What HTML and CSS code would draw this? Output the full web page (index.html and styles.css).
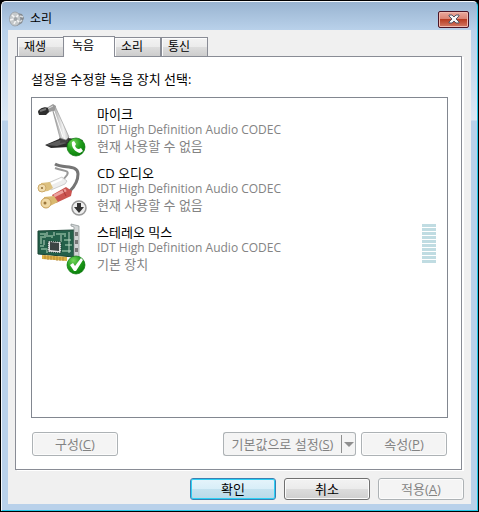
FILE: index.html
```html
<!DOCTYPE html>
<html lang="ko">
<head>
<meta charset="UTF-8">
<meta name="viewport" content="width=device-width, initial-scale=1">
<title>소리</title>
<link rel="stylesheet" href="styles.css">
</head>
<body>
<div class="window">
    <header class="titlebar">
        <svg class="title-icon" viewBox="0 0 16 16" aria-hidden="true">
            <path d="M8 2l5 1 2 4-2 5-5 3z" fill="#858a8f"/>
            <ellipse cx="6" cy="8" rx="5.500" ry="7" fill="#c5c9cb" stroke="#92989d" stroke-width=".7"/>
            <path d="M3 4l3 3M1 9l4-1M5 13l2-4M9 4L7 7M10 11L8 9" stroke="#f5f5f5" stroke-width="1.500"/>
            <circle cx="6.500" cy="8" r="2" fill="#a1a6a9"/>
            <path d="M11 5l3 1M11 11l2-2" stroke="#d9dcde" stroke-width="1.500"/>
        </svg>
        <h1 class="title">소리</h1>
        <button class="close" aria-label="닫기">
            <svg viewBox="0 0 12 10" aria-hidden="true">
                <path d="M1 1h3l2 2 2-2h3v1L8 5l3 3v1H8L6 7 4 9H1V8l3-3-3-3z" fill="#f7f7f7" stroke="#535666"/>
            </svg>
        </button>
    </header>
    <main class="dialog">
        <div class="tabs" role="tablist">
            <button class="tab" role="tab">재생</button>
            <button class="tab active" role="tab" aria-selected="true">녹음</button>
            <button class="tab" role="tab">소리</button>
            <button class="tab" role="tab">통신</button>
        </div>
        <section class="panel">
            <p class="prompt">설정을 수정할 녹음 장치 선택:</p>
            <ul class="devices">
                <li class="device">
                    <svg class="device-icon" viewBox="0 0 50 56" aria-hidden="true">
                        <defs>
                            <linearGradient id="arm" x1="0" x2="1" y1=".3" y2="0">
                                <stop offset="0" stop-color="#888"/>
                                <stop offset=".5" stop-color="#f4f4f4"/>
                                <stop offset="1" stop-color="#888"/>
                            </linearGradient>
                            <radialGradient id="green" cx=".35" cy=".25" r=".8">
                                <stop offset="0" stop-color="#75d65c"/>
                                <stop offset=".5" stop-color="#23a01e"/>
                                <stop offset="1" stop-color="#087c08"/>
                            </radialGradient>
                        </defs>
                        <path d="M8 43l14-6 3-4 6 3 15 2-4 6-10 1-18 1z" fill="#2c2c2c"/>
                        <path d="M9 43l14-5 7 3-10 3z" fill="#5d5d5d"/>
                        <path d="M24 34l8 1-1 5-8 1z" fill="#444"/>
                        <path d="M15 6l3-2 14 31-3 3-6-2z" fill="url(#arm)" stroke="#8b8b8b" stroke-width=".6"/>
                        <path d="M17 9l9 26" stroke="#fff"/>
                        <path d="M8 7l8-5 3 2-1 4-8 3z" fill="#999"/>
                        <path d="M10 7l6-3" stroke="#ddd"/>
                        <path d="M1 10c0-3 7-6 10-4l1 4-3 3-7 0z" fill="#2e2e2e"/>
                        <path d="M3 9l6-2" stroke="#777" stroke-width="2"/>
                        <circle cx="39" cy="45" r="9" fill="url(#green)" stroke="#0c780e" stroke-width=".7"/>
                        <path d="M35 40l2-1 2 3-1 2c1 2 2 3 4 3l2-1 2 3-3 2c-5-1-9-6-8-11z" fill="#fff"/>
                    </svg>
                    <div class="device-text">
                        <h2 class="device-name">마이크</h2>
                        <p class="driver">IDT High Definition Audio CODEC</p>
                        <p>현재 사용할 수 없음</p>
                    </div>
                </li>
                <li class="device">
                    <svg class="device-icon" viewBox="0 0 50 56" aria-hidden="true">
                        <path d="M18 3c8 5 23 0 23 10 0 7-3 12-8 17" fill="none" stroke="#757575" stroke-width="3"/>
                        <path d="M18 7c8 3 15 2 12 7l-4 5" fill="none" stroke="#999" stroke-width="2"/>
                        <path d="M11 22l14-6 5 4-2 3-14 6z" fill="#eee" stroke="#bbb" stroke-width=".7"/>
                        <path d="M14 23l11-5" stroke="#fff" stroke-width="2"/>
                        <path d="M4 22l9-1 3 6-5 3-7 1z" fill="#dcc07f"/>
                        <circle cx="5" cy="27" r="4" fill="#efdbae" stroke="#cdaa69"/>
                        <path d="M15 34l14-8 6 4-1 5-15 7z" fill="#cb5551"/>
                        <path d="M17 35l12-6" stroke="#eda29f" stroke-width="3"/>
                        <path d="M26 29l3 6" stroke="#aa3838"/>
                        <path d="M7 36l10-1 4 6-6 3-8 3z" fill="#d9b970"/>
                        <circle cx="9" cy="42" r="5" fill="#efd8a4" stroke="#c79f58"/>
                        <circle cx="5" cy="27" r="1" fill="#8d6930"/>
                        <circle cx="8" cy="42" r="1.500" fill="#9b763b"/>
                        <circle cx="42" cy="47" r="7" fill="#eee" stroke="#999" stroke-width="1.500"/>
                        <path d="M40 42h4v4h3l-5 6-5-6h3z" fill="#333"/>
                    </svg>
                    <div class="device-text">
                        <h2 class="device-name">CD 오디오</h2>
                        <p class="driver">IDT High Definition Audio CODEC</p>
                        <p>현재 사용할 수 없음</p>
                    </div>
                </li>
                <li class="device">
                    <svg class="device-icon" viewBox="0 0 50 56" aria-hidden="true">
                        <path d="M1 11l36-1v27L1 34z" fill="#24604a" stroke="#194333"/>
                        <path d="M3 14h5v3H4v7M19 14h9v3M27 20h7M28 25h7M4 29h6v4M25 31h9M11 16h4v2M3 26h4" fill="none" stroke="#6c9e84" stroke-width="2"/>
                        <path d="M10 12v5M17 12v4M24 15v7M32 12v21M7 20v5" stroke="#b9d1c0"/>
                        <path d="M11 21l13 1v11l-13-1z" fill="#ddd" stroke="#143529" stroke-dasharray="1 1"/>
                        <path d="M13 22l9 1v8l-9-1z" fill="#3c4444"/>
                        <path d="M5 35l25 2v4L5 39z" fill="#deb145"/>
                        <path d="M8 35v4M11 35v5M14 36v4M17 36v4M20 36v5M23 37v4M26 37v4" stroke="#a5772d" stroke-width=".7"/>
                        <path d="M37 7l-3-1V4l8 2v35l-5-2z" fill="#d1d4d5" stroke="#8a9294" stroke-width=".7"/>
                        <path d="M38 12h3v4h-3zM38 20h3v4h-3zM38 28h3v4h-3z" fill="#777"/>
                        <circle cx="39" cy="45" r="9" fill="url(#green)" stroke="#0c780e" stroke-width=".7"/>
                        <path d="M33 45l3-2 2 3 6-8 2 2-7 11h-2z" fill="#fff"/>
                    </svg>
                    <div class="device-text">
                        <h2 class="device-name">스테레오 믹스</h2>
                        <p class="driver">IDT High Definition Audio CODEC</p>
                        <p>기본 장치</p>
                    </div>
                    <div class="level" role="img" aria-label="입력 수준"></div>
                </li>
            </ul>
            <div class="actions">
                <button class="btn" disabled>구성(<u>C</u>)</button>
                <div class="split">
                    <button class="btn split-main" disabled>기본값으로 설정(<u>S</u>)</button>
                    <button class="btn split-arrow" aria-label="기본값 옵션" disabled></button>
                </div>
                <button class="btn" disabled>속성(<u>P</u>)</button>
            </div>
        </section>
        <footer class="footer">
            <button class="btn default">확인</button>
            <button class="btn">취소</button>
            <button class="btn" disabled>적용(<u>A</u>)</button>
        </footer>
    </main>
</div>
</body>
</html>
```

FILE: styles.css
```css
* {
    box-sizing: border-box;
}
body {
    margin: 0;
    min-height: 100vh;
    padding: 1px;
    display: flex;
    background: #000;
    color: #000;
    font: 13px/16px "Open Sans", "Noto Sans CJK KR", sans-serif;
}
h1, h2, p, ul {
    margin: 0;
    padding: 0;
    font-size: inherit;
    font-weight: normal;
}
button {
    font: inherit;
    color: inherit;
    padding: 0;
}

/* window frame */
.window {
    flex: 1;
    display: flex;
    flex-direction: column;
    padding: 0 6px 6px;
    border: 1px solid #22c8e8;
    border-top-color: #f4f8fc;
    border-left-color: #f4f8fc;
    border-radius: 5px 5px 0 0;
    background: linear-gradient(#99b4d1 0, #b9d1ea 28px, #dce8f5 118px, #b9d1ea 119px);
}
.titlebar {
    height: 28px;
    display: flex;
    align-items: center;
    padding: 6px 2px 0 1px;
}
.title-icon {
    width: 16px;
    height: 16px;
    margin-right: 5px;
}
.title {
    flex: 1;
    font-size: 12px;
}
.close {
    width: 31px;
    height: 17px;
    display: flex;
    align-items: center;
    justify-content: center;
    border: 1px solid #4c1526;
    border-radius: 2px;
    background: linear-gradient(#eba99d, #d98070 50%, #b83c22 50%, #d37a66);
    box-shadow: inset 0 0 0 1px #f0b9ae;
}
.close svg {
    width: 12px;
    height: 10px;
}
.dialog {
    flex: 1;
    display: flex;
    flex-direction: column;
    padding: 6px 7px 4px;
    background: #f0f0f0;
}

/* tabs */
.tabs {
    display: flex;
    align-items: flex-end;
    padding-left: 2px;
}
.tab {
    width: 47px;
    height: 19px;
    padding: 0 7px 0 6px;
    border: 1px solid #898c95;
    border-bottom: 0;
    background: linear-gradient(#f3f3f3, #ebebeb 50%, #dddddd 50%, #cdcdcd);
    box-shadow: inset 1px 1px #fcfcfc;
    font-size: 12px;
    text-align: left;
}
.tab.active {
    width: 52px;
    height: 21px;
    padding-left: 8px;
    padding-bottom: 2px;
    margin: 0 -1px -1px;
    background: #fff;
    z-index: 1;
}
.panel {
    flex: 1;
    display: flex;
    flex-direction: column;
    padding: 14px 13px 13px 15px;
    margin-right: 2px;
    border: 1px solid #898c95;
    background: #fff;
    box-shadow: 2px 1px #fff;
}
.prompt {
    margin-bottom: 10px;
}

/* device list */
.devices {
    flex: 1;
    padding: 4px 11px 4px 5px;
    border: 1px solid #828790;
    list-style: none;
}
.device {
    display: flex;
    align-items: center;
    gap: 10px;
    margin-bottom: 3px;
}
.device-icon {
    width: 50px;
    height: 56px;
}
.device-text {
    flex: 1;
    color: #838383;
}
.device-name {
    color: #000;
}
.driver {
    font-size: 12px;
}
.level {
    width: 14px;
    height: 39px;
    margin-bottom: 9px;
    background: repeating-linear-gradient(#c0dce2 0 3px, #fff 3px 4px);
}

/* buttons */
.btn {
    width: 86px;
    height: 24px;
    border: 1px solid #707070;
    border-radius: 3px;
    background: linear-gradient(#f3f3f3, #ebebeb 50%, #dddddd 50%, #cfcfcf);
    box-shadow: inset 0 0 0 1px #fcfcfc;
}
.btn:disabled {
    border-color: #adb2b5;
    background: #f4f4f4;
    color: #838383;
}
.btn.default {
    border-color: #3c7fb1;
    background: linear-gradient(#e5f4fb, #d8eef8 50%, #c4e2ef 50%, #b9d9e8);
    box-shadow: inset 0 0 0 1px #2cd0f5;
}
.actions {
    display: flex;
    gap: 5px;
    margin: 14px 1px 0;
}
.split {
    display: flex;
    margin-left: auto;
}
.btn.split-main {
    width: 118px;
    border-right: 0;
    border-radius: 3px 0 0 3px;
    box-shadow: none;
}
.btn.split-arrow {
    width: 15px;
    padding: 0;
    display: flex;
    align-items: center;
    border-left: 0;
    border-radius: 0 3px 3px 0;
    box-shadow: none;
}
.split-arrow::before {
    content: "";
    height: 18px;
    border-left: 1px solid #8e8f8f;
    margin-right: 2px;
}
.split-arrow::after {
    content: "";
    border: 5px solid transparent;
    border-top-color: #8f8f8f;
    border-bottom: 0;
}
.footer {
    display: flex;
    justify-content: flex-end;
    gap: 8px;
    padding-top: 8px;
}
.footer .btn {
    height: 22px;
}
```
